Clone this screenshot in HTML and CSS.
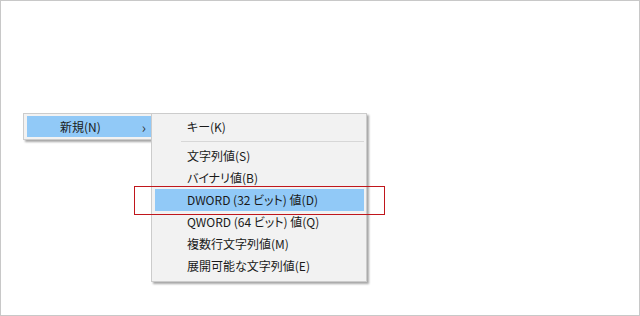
FILE: index.html
```html
<!DOCTYPE html>
<html lang="ja">
<head>
<meta charset="utf-8">
<link rel="stylesheet" href="styles.css">
</head>
<body>
<div class="frame">
  <div class="menu parent">
    <div class="item active"><span class="label">新規(N)</span><span class="arrow">›</span></div>
  </div>
  <div class="menu sub">
    <div class="item">キー(K)</div>
    <div class="sep"></div>
    <div class="item">文字列値(S)</div>
    <div class="item">バイナリ値(B)</div>
    <div class="item active">DWORD (32 ビット) 値(D)</div>
    <div class="item">QWORD (64 ビット) 値(Q)</div>
    <div class="item">複数行文字列値(M)</div>
    <div class="item">展開可能な文字列値(E)</div>
  </div>
  <div class="callout"></div>
</div>
</body>
</html>
```
FILE: styles.css
```css
html, body {
  margin: 0;
  padding: 0;
  background: #fff;
}
.frame {
  position: relative;
  box-sizing: border-box;
  width: 640px;
  height: 316px;
  border: 1px solid #c8c8c8;
  background: #fff;
  font-family: "Noto Sans CJK JP", "Noto Sans", sans-serif;
  font-size: 12px;
  font-feature-settings: "palt";
  color: #1a1a1a;
  overflow: hidden;
}
.menu {
  position: absolute;
  box-sizing: border-box;
  background: #f2f2f2;
  border: 1px solid #cccccc;
  box-shadow: 2px 2px 2px rgba(0, 0, 0, 0.35);
}
.parent {
  left: 22px;
  top: 112px;
  width: 134px;
  padding: 2px 2px 2px 3px;
}
.parent .item {
  display: flex;
  align-items: center;
  height: 21px;
  padding-left: 33px;
  padding-right: 8px;
}
.parent .label {
  flex: 1;
}
.arrow {
  font-size: 14px;
  color: #333;
  line-height: 1;
}
.sub {
  left: 150px;
  top: 112px;
  width: 216px;
  padding: 2px 2px 4px 3px;
}
.sub .item {
  height: 22px;
  line-height: 22px;
  padding-left: 32px;
  white-space: nowrap;
}
.item.active {
  background: #91c9f7;
}
.sep {
  height: 7px;
  display: flex;
  align-items: center;
  padding-left: 26px;
}
.sep::before {
  content: "";
  flex: 1;
  height: 1px;
  background: #d7d7d7;
}
.callout {
  position: absolute;
  left: 133px;
  top: 185px;
  width: 251px;
  height: 29px;
  box-sizing: border-box;
  border: 1px solid #c0161c;
}
```
